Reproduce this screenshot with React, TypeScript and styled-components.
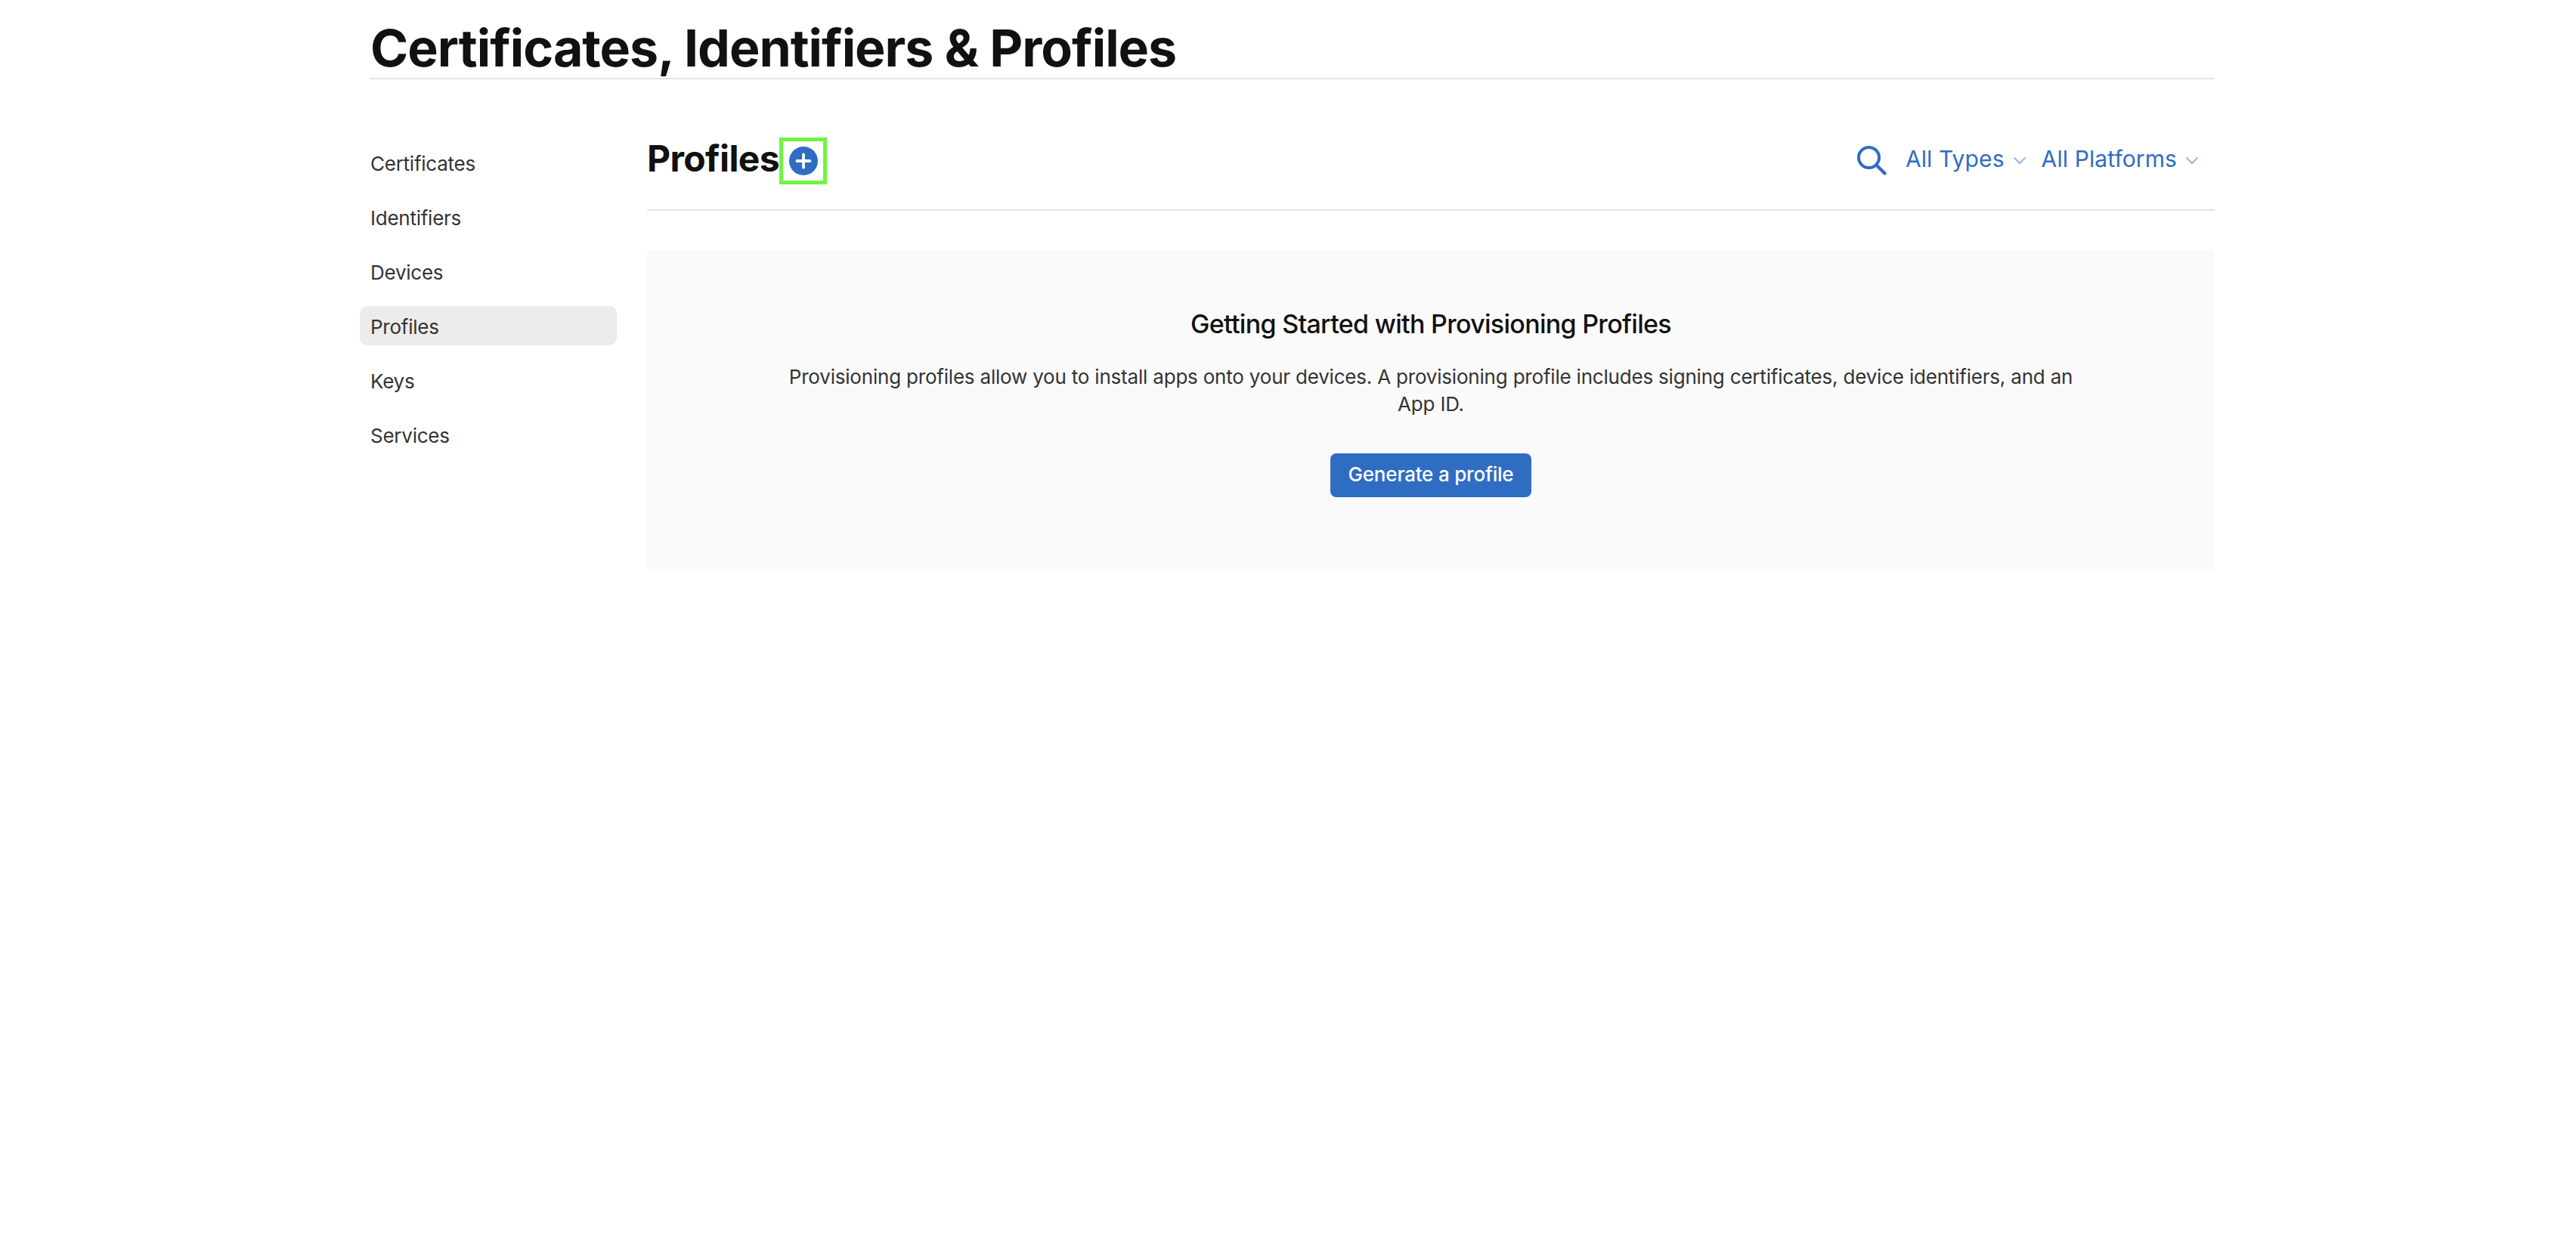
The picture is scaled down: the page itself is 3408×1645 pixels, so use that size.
import React from 'react'
import styled, { createGlobalStyle } from 'styled-components'

const navItems = ['Certificates', 'Identifiers', 'Devices', 'Profiles', 'Keys', 'Services']

const GlobalStyle = createGlobalStyle`
  html, body {
    margin: 0;
    padding: 0;
    background: #fff;
    font-family: Inter, "Liberation Sans", sans-serif;
  }
`

const App = () => (
  <>
    <GlobalStyle />
    <Page>
      <PageTitle>Certificates, Identifiers &amp; Profiles</PageTitle>
      <Columns>
        <Sidebar>
          {navItems.map((item) => (
            <NavItem key={item} $active={item === 'Profiles'}>
              {item}
            </NavItem>
          ))}
        </Sidebar>
        <Main>
          <Toolbar>
            <TitleGroup>
              <SectionTitle>Profiles</SectionTitle>
              <AddHighlight>
                <AddButton viewBox='0 0 38 38'>
                  <circle cx='19' cy='19' r='19' fill='#2f6dc3' />
                  <path d='M19 10.5v17M10.5 19h17' stroke='#fff' strokeWidth='3.8' strokeLinecap='round' />
                </AddButton>
              </AddHighlight>
            </TitleGroup>
            <Filters>
              <SearchIcon viewBox='0 0 39 39' fill='none'>
                <circle cx='15.5' cy='15.5' r='13.5' stroke='#2f6dc3' strokeWidth='4' />
                <path d='M25.5 25.5L36.5 36.5' stroke='#2f6dc3' strokeWidth='4.4' strokeLinecap='round' />
              </SearchIcon>
              <Filter>
                All Types
                <Chevron />
              </Filter>
              <Filter>
                All Platforms
                <Chevron />
              </Filter>
            </Filters>
          </Toolbar>
          <EmptyPanel>
            <PanelTitle>Getting Started with Provisioning Profiles</PanelTitle>
            <PanelText>
              Provisioning profiles allow you to install apps onto your devices. A provisioning profile includes
              signing certificates, device identifiers, and an App ID.
            </PanelText>
            <PrimaryButton>Generate a profile</PrimaryButton>
          </EmptyPanel>
        </Main>
      </Columns>
    </Page>
  </>
)

const Chevron = () => (
  <ChevronIcon viewBox='0 0 18 11' fill='none'>
    <path d='M1.5 1.5L9 9l7.5-7.5' stroke='#9dbbe3' strokeWidth='2.4' />
  </ChevronIcon>
)

export default App

const Page = styled.div`
  box-sizing: border-box;
  width: 2440px;
  min-height: 1645px;
  margin-left: 490px;
`

const PageTitle = styled.h1`
  margin: 0;
  border-bottom: 2px solid #e3e3e3;
  padding-top: 24px;
  box-sizing: border-box;
  height: 105px;
  font-size: 68px;
  line-height: 78px;
  font-weight: 700;
  color: #111;
  letter-spacing: -1px;
`

const Columns = styled.div`
  display: flex;
`

const Sidebar = styled.nav`
  width: 340px;
  margin-left: -14px;
  margin-right: 40px;
  padding-top: 84px;
  flex-shrink: 0;
`

const NavItem = styled.div<{ $active?: boolean }>`
  height: 52px;
  margin-bottom: 20px;
  padding-left: 14px;
  border-radius: 10px;
  font-size: 26px;
  line-height: 56px;
  letter-spacing: -0.25px;
  color: #333;
  background: ${(p) => (p.$active ? '#ececec' : 'transparent')};
`

const Main = styled.main`
  flex: 1;
  min-width: 0;
`

const Toolbar = styled.div`
  display: flex;
  align-items: center;
  justify-content: space-between;
  height: 174px;
  box-sizing: border-box;
  padding-top: 38px;
  padding-right: 21px;
  border-bottom: 2px solid #e3e3e3;
`

const TitleGroup = styled.div`
  display: flex;
  align-items: center;
`

const SectionTitle = styled.h2`
  margin: 0;
  font-size: 48px;
  line-height: 60px;
  font-weight: 700;
  letter-spacing: -0.6px;
  color: #111;
`

const AddHighlight = styled.div`
  display: flex;
  align-items: center;
  justify-content: center;
  box-sizing: border-box;
  width: 63px;
  height: 62px;
  margin-top: 6px;
  border: 5px solid #6ef542;
`

const AddButton = styled.svg`
  width: 38px;
  height: 38px;
  display: block;
`

const Filters = styled.div`
  display: flex;
  align-items: center;
`

const SearchIcon = styled.svg`
  width: 39px;
  height: 39px;
  margin-top: 4px;
  margin-right: 25px;
`

const Filter = styled.div`
  display: flex;
  align-items: center;
  margin-right: 20px;
  font-size: 30px;
  line-height: 40px;
  letter-spacing: 0.1px;
  color: #2f6dc3;

  &:last-child {
    margin-right: 0;
  }
`

const ChevronIcon = styled.svg`
  width: 18px;
  height: 11px;
  margin-left: 11px;
  margin-top: 4px;
`

const EmptyPanel = styled.section`
  box-sizing: border-box;
  height: 426px;
  margin-top: 51px;
  padding-top: 77px;
  background: #fafafa;
  border-radius: 4px;
  text-align: center;
`

const PanelTitle = styled.h3`
  margin: 0 0 30px;
  font-size: 34px;
  line-height: 44px;
  font-weight: 500;
  color: #111;
  letter-spacing: -0.7px;
`

const PanelText = styled.p`
  width: 1720px;
  margin: 0 auto 47px;
  font-size: 26px;
  line-height: 36px;
  letter-spacing: -0.2px;
  color: #333;
`

const PrimaryButton = styled.button`
  display: block;
  box-sizing: border-box;
  width: 266px;
  height: 58px;
  margin: 0 auto;
  padding: 0 0 3px;
  border: none;
  border-radius: 8px;
  background: #2f6dc3;
  color: #fff;
  font-family: inherit;
  font-size: 26px;
  font-weight: 500;
  letter-spacing: -0.2px;
`
